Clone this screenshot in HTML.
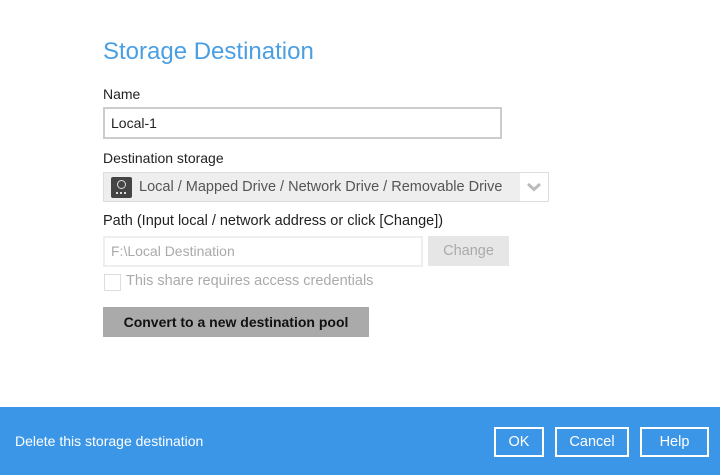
<!DOCTYPE html>
<html><head><style>
body{margin:0;width:720px;height:475px;position:relative;background:#fff;font-family:"Liberation Sans",sans-serif;overflow:hidden;color:#222}
.a{position:absolute}
.lbl{font-size:14px;color:#222}
</style></head><body>
<div class="a" style="left:103px;top:38px;font-size:24px;color:#4a9fe3">Storage Destination</div>
<div class="a lbl" style="left:103px;top:86px">Name</div>
<div class="a" style="left:103px;top:107px;height:28px;border:2px solid #ccc;font-size:14px;line-height:28px;padding-left:6px;width:389px">Local-1</div>
<div class="a lbl" style="left:103px;top:150px">Destination storage</div>
<div class="a" style="left:103px;top:172px;width:446px;height:30px;background:#eee;box-sizing:border-box;border:1px solid #ddd"></div>
<div class="a" style="left:520px;top:173px;width:28px;height:28px;background:#fff"></div>
<svg class="a" style="left:527px;top:182px" width="14" height="10"><path d="M1 2 L7 7.5 L13 2" stroke="#bbb" stroke-width="3" fill="none"/></svg>
<div class="a" style="left:111px;top:177px;width:21px;height:21px;background:#444;border-radius:2px"></div>
<div class="a" style="left:117px;top:180px;width:7px;height:7px;border:1px solid #ddd;border-radius:50%"></div>
<div class="a" style="left:116px;top:192px;width:10px;height:2px;border-top:2px dotted #ddd"></div>
<div class="a" style="left:139px;top:179px;font-size:14.5px;color:#555">Local / Mapped Drive / Network Drive / Removable Drive</div>
<div class="a lbl" style="left:103px;top:213px;font-size:14.5px">Path (Input local / network address or click [Change])</div>
<div class="a" style="left:103px;top:236px;width:320px;height:31px;border:2px solid #eee;box-sizing:border-box;font-size:14px;color:#aaa;line-height:27px;padding-left:6px">F:\Local Destination</div>
<div class="a" style="left:428px;top:236px;width:81px;height:30px;background:#e6e6e6;font-size:14.5px;color:#aaa;text-align:center;line-height:30px">Change</div>
<div class="a" style="left:104px;top:274px;width:17px;height:17px;border:1px solid #ddd;box-sizing:border-box"></div>
<div class="a" style="left:126px;top:273px;font-size:14.5px;color:#aaa">This share requires access credentials</div>
<div class="a" style="left:103px;top:307px;width:266px;height:30px;background:#aaa;font-size:14px;color:#111;text-align:center;line-height:30px;font-weight:bold">Convert to a new destination pool</div>
<div class="a" style="left:0;top:407px;width:720px;height:68px;background:#3c96e8"></div>
<div class="a" style="left:15px;top:433px;font-size:14px;color:#fff">Delete this storage destination</div>
<div class="a" style="left:494px;top:427px;width:50px;height:30px;border:2px solid #fff;box-sizing:border-box;color:#fff;font-size:14.5px;text-align:center;line-height:26px">OK</div>
<div class="a" style="left:555px;top:427px;width:74px;height:30px;border:2px solid #fff;box-sizing:border-box;color:#fff;font-size:14.5px;text-align:center;line-height:26px">Cancel</div>
<div class="a" style="left:640px;top:427px;width:69px;height:30px;border:2px solid #fff;box-sizing:border-box;color:#fff;font-size:14.5px;text-align:center;line-height:26px">Help</div>
</body></html>
